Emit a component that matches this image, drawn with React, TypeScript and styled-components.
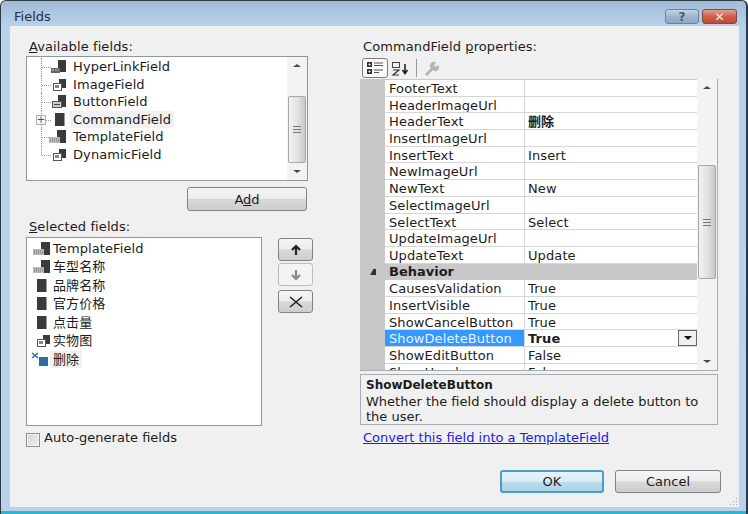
import styled, { createGlobalStyle } from 'styled-components';

const GlobalStyle = createGlobalStyle`
	html, body {
		margin: 0;
		padding: 0;
		background: #ffffff;
		overflow: hidden;
	}
	* {
		box-sizing: border-box;
	}
`;

const FONT = `"DejaVu Sans", Verdana, "Noto Sans CJK SC", sans-serif`;

const Window = styled.div`
	width: 748px;
	height: 514px;
	display: flex;
	flex-direction: column;
	padding: 0 7px 7px 9px;
	background: linear-gradient(180deg, #a3bbd6 0, #b9d2eb 26px, #b9d3ee 100%);
	border: 1px solid #2b3b45;
	border-width: 1px 2px 0 1px;
	border-radius: 6px 6px 0 0;
	box-shadow: inset 0 -3px 0 #2bb7cf;
	font-family: ${FONT};
	font-size: 13px;
	color: #1c1c1c;
`;

const TitleBar = styled.div`
	height: 25px;
	flex: none;
	display: flex;
	align-items: center;
	justify-content: space-between;
	padding: 6px 0 0 4px;
	margin-right: 2px;
`;

const Title = styled.span`
	font-size: 13px;
	color: #26303a;
`;

const WindowButtons = styled.div`
	display: flex;
	gap: 3px;
`;

const WindowButton = styled.div<{ $close?: boolean }>`
	width: ${({ $close }) => ($close ? '35px' : '34px')};
	height: 15px;
	display: flex;
	align-items: center;
	justify-content: center;
	border: 1px solid ${({ $close }) => ($close ? '#7d4a44' : '#6f8398')};
	border-radius: 3px;
	background: ${({ $close }) =>
		$close
			? 'linear-gradient(180deg, #e2a08e 0, #cf5f48 50%, #c04a36 100%)'
			: 'linear-gradient(180deg, #c3d5e7 0, #9db5ce 50%, #8ea8c4 100%)'};
	color: ${({ $close }) => ($close ? '#f4f4f4' : '#4d5a66')};
	font-size: 12px;
	font-weight: bold;
	line-height: 1;
`;

const Panel = styled.div`
	position: relative;
	flex: 1;
	display: flex;
	flex-direction: column;
	background: #f0f0f0;
	padding: 13px 18px 14px 16px;
	min-height: 0;
`;

const SizeGrip = styled.svg`
	position: absolute;
	right: 1px;
	bottom: 1px;
`;

const Columns = styled.div`
	display: flex;
	gap: 47px;
`;

const LeftColumn = styled.div`
	width: 287px;
	display: flex;
	flex-direction: column;
`;

const RightColumn = styled.div`
	width: 358px;
	display: flex;
	flex-direction: column;
`;

const FieldLabel = styled.div<{ $top?: number }>`
	height: 16px;
	line-height: 16px;
	padding-left: 3px;
	margin-top: ${({ $top }) => $top ?? 0}px;
	letter-spacing: 0.1px;
	white-space: nowrap;
`;

const ListBox = styled.div`
	width: 282px;
	height: 125px;
	margin-top: 1px;
	display: flex;
	border: 1px solid #8f979e;
	background: #ffffff;
	overflow: hidden;
`;

const TreeList = styled.div`
	flex: 1;
	padding-top: 1px;
`;

const TreeRow = styled.div<{ $last?: boolean }>`
	position: relative;
	height: 17.5px;
	display: flex;
	align-items: center;
	padding-left: 14px;

	&::before {
		content: '';
		position: absolute;
		left: 14px;
		top: 0;
		height: ${({ $last }) => ($last ? '9px' : '100%')};
		border-left: 1px dotted #9a9a9a;
	}

	&::after {
		content: '';
		position: absolute;
		left: 15px;
		top: 9px;
		width: 9px;
		border-top: 1px dotted #9a9a9a;
	}
`;

const Expander = styled.span`
	position: absolute;
	z-index: 1;
	left: 9px;
	top: 4px;
	width: 10px;
	height: 10px;
	display: flex;
	align-items: center;
	justify-content: center;
	background: #f4f6fa;
	border: 1px solid #aab0bb;
	color: #3d4f8c;
	font-size: 10px;
	line-height: 1;
`;

const TreeIcon = styled.span`
	width: 22px;
	margin-left: 3px;
	flex: none;
	display: flex;
	justify-content: flex-end;
	position: relative;
	z-index: 1;
`;

const ItemText = styled.span<{ $hot?: boolean; $gap: number }>`
	margin-left: ${({ $gap }) => $gap}px;
	padding: 0 ${({ $hot }) => ($hot ? '3px' : '0')};
	line-height: 17px;
	background: ${({ $hot }) => ($hot ? '#f1f1f1' : 'transparent')};
	letter-spacing: 0.1px;
	white-space: nowrap;
`;

const ScrollBar = styled.div<{ $width: number }>`
	width: ${({ $width }) => $width}px;
	flex: none;
	display: flex;
	flex-direction: column;
	align-items: center;
	background: #f3f3f3;
`;

const ScrollArrow = styled.div<{ $down?: boolean }>`
	height: 17px;
	flex: none;
	display: flex;
	align-items: center;
	justify-content: center;

	&::after {
		content: '';
		border-left: 4px solid transparent;
		border-right: 4px solid transparent;
		${({ $down }) => ($down ? 'border-top: 3px solid #4a4a4a;' : 'border-bottom: 3px solid #4a4a4a;')}
	}
`;

const ScrollTrack = styled.div<{ $top: number; $height: number }>`
	flex: 1;
	width: 100%;
	padding: ${({ $top }) => $top}px 1px 0;

	& > div {
		height: ${({ $height }) => $height}px;
	}
`;

const ScrollThumb = styled.div`
	display: flex;
	align-items: center;
	justify-content: center;
	border: 1px solid #a4a8ac;
	border-radius: 2px;
	background: linear-gradient(90deg, #f2f2f2 0, #e4e4e4 50%, #c8c8c8 100%);
`;

const Grip = styled.span`
	width: 8px;
	height: 7px;
	border-top: 1px solid #777;
	border-bottom: 1px solid #777;
	background: linear-gradient(#777, #777) center / 100% 1px no-repeat;
`;

const AddRow = styled.div`
	margin-top: 6px;
	padding-right: 6px;
	display: flex;
	justify-content: flex-end;
`;

const Button = styled.button<{ $width: number; $height?: number; $primary?: boolean }>`
	width: ${({ $width }) => $width}px;
	height: ${({ $height }) => $height ?? 24}px;
	padding: 0;
	display: flex;
	align-items: center;
	justify-content: center;
	font-family: ${FONT};
	font-size: 13px;
	color: #1c1c1c;
	border: ${({ $primary }) => ($primary ? '2px solid #4a9ccb' : '1px solid #7f8488')};
	border-radius: 3px;
	background: ${({ $primary }) =>
		$primary
			? 'linear-gradient(180deg, #e8f3f9 0, #d8ebf5 50%, #bcdcec 52%, #aed2e6 100%)'
			: 'linear-gradient(180deg, #f5f5f5 0, #ececec 48%, #d8d8d8 52%, #cdcdcd 100%)'};
`;

const SelectedArea = styled.div`
	display: flex;
	gap: 16px;
	margin-top: 2px;
`;

const SelectedList = styled.div`
	width: 236px;
	height: 189px;
	padding-top: 1px;
	border: 1px solid #8f979e;
	background: #ffffff;
	flex: none;
`;

const SelectedRow = styled.div`
	height: 18.5px;
	display: flex;
	align-items: center;
	padding-left: 3px;
`;

const SelectedIcon = styled.span`
	width: 20px;
	flex: none;
	display: flex;
	justify-content: flex-end;
`;

const MoveButtons = styled.div`
	display: flex;
	flex-direction: column;
	gap: 2px;
	padding-top: 1px;
`;

const MoveButton = styled(Button)<{ $gap?: number }>`
	margin-top: ${({ $gap }) => $gap ?? 0}px;

	&:disabled {
		background: #f3f3f3;
		border-color: #bcbcbc;
	}
`;

const AutoRow = styled.label`
	display: flex;
	align-items: center;
	gap: 4px;
	margin-top: 3px;
	height: 16px;
`;

const CheckBox = styled.span`
	width: 14px;
	height: 14px;
	margin-top: 5px;
	flex: none;
	border: 1px solid #8f8f8f;
	background: linear-gradient(135deg, #d4d4d4 0, #f0f0f0 100%);
	box-shadow: inset 0 0 0 1px #f4f4f4;
`;

const Toolbar = styled.div`
	height: 20px;
	margin-top: 3px;
	display: flex;
	align-items: center;
	padding-left: 2px;
	gap: 3px;
`;

const ToolToggle = styled.div<{ $on?: boolean }>`
	width: 26px;
	height: 20px;
	display: flex;
	align-items: center;
	justify-content: center;
	border: ${({ $on }) => ($on ? '1px solid #7a7f84' : '1px solid transparent')};
	border-radius: 3px;
	background: ${({ $on }) => ($on ? '#fafafa' : 'transparent')};
`;

const ToolSeparator = styled.span`
	width: 1px;
	height: 18px;
	background: #9a9a9a;
	margin: 0 3px 0 2px;
`;

const Grid = styled.div`
	height: 292px;
	margin-top: 1px;
	display: flex;
	border: 1px solid #a8adb2;
	border-width: 0 1px 1px 0;
	background: #ffffff;
	overflow: hidden;
`;

const GridBody = styled.div`
	flex: 1;
	min-width: 0;
	padding-top: 1px;
	background: #c8c8c8;
`;

const Row = styled.div`
	height: 16.7px;
	display: grid;
	grid-template-columns: 25px 140px 1fr;
	background: #c8c8c8;
`;

const NameCell = styled.div<{ $selected?: boolean }>`
	padding-left: 4px;
	line-height: 17px;
	white-space: nowrap;
	letter-spacing: 0.1px;
	overflow: hidden;
	border-bottom: 1px solid #d6d6d6;
	border-right: 1px solid #d6d6d6;
	background: ${({ $selected }) => ($selected ? '#3399ff' : '#ffffff')};
	color: ${({ $selected }) => ($selected ? '#e8f2ff' : '#1c1c1c')};
`;

const ValueCell = styled.div<{ $bold?: boolean }>`
	position: relative;
	padding-left: 3px;
	line-height: 17px;
	white-space: nowrap;
	letter-spacing: 0.1px;
	overflow: hidden;
	border-bottom: 1px solid #d6d6d6;
	background: #ffffff;
	font-weight: ${({ $bold }) => ($bold ? 'bold' : 'normal')};
`;

const DropButton = styled.span`
	position: absolute;
	right: 0;
	top: 0;
	width: 19px;
	height: 16px;
	display: flex;
	align-items: center;
	justify-content: center;
	border: 1px solid #66696c;
	background: #f0f0f0;

	&::after {
		content: '';
		border-left: 4px solid transparent;
		border-right: 4px solid transparent;
		border-top: 4px solid #111;
	}
`;

const CategoryRow = styled.div`
	height: 16.7px;
	display: grid;
	grid-template-columns: 25px 1fr;
	align-items: center;
	background: #c8c8c8;
`;

const Collapse = styled.span`
	justify-self: center;
	border-left: 3px solid transparent;
	border-bottom: 5px solid #333;
	border-right: 3px solid #333;
	width: 6px;
	height: 6px;
`;

const CategoryName = styled.span`
	padding-left: 4px;
	font-weight: bold;
`;

const Description = styled.div`
	height: 51px;
	margin-top: 3px;
	padding: 3px 5px 0;
	border: 1px solid #a8adb2;
	line-height: 15.5px;
`;

const DescriptionTitle = styled.div`
	font-size: 12px;
	font-weight: bold;
`;

const ConvertLink = styled.a`
	display: block;
	margin-top: 5px;
	padding-left: 3px;
	height: 16px;
	line-height: 16px;
	color: #1a1aee;
	text-decoration: underline;
`;

const Footer = styled.div`
	margin-top: auto;
	display: flex;
	justify-content: flex-end;
	gap: 11px;
`;

type IconKind = 'link' | 'image' | 'button' | 'command' | 'template' | 'bound' | 'delete';

const FieldIcon = ({ kind }: { kind: IconKind }) => (
	<svg width="20" height="15" viewBox="0 0 20 15">
		{kind === 'bound' ? (
			<rect x="7" y="1" width="9.500" height="13" fill="#3a3a3a" />
		) : kind === 'command' ? (
			<rect x="9" y="1" width="9.500" height="13" fill="#3a3a3a" />
		) : kind === 'delete' ? (
			<>
				<rect x="9" y="5" width="9" height="9" fill="#2f6f9f" />
				<path d="M2 1l6 5M8 1L2 6" stroke="#2f6f9f" strokeWidth="1.6" />
			</>
		) : kind === 'image' ? (
			<>
				<rect x="13" y="2" width="7" height="9" fill="#3a3a3a" />
				<rect x="7.500" y="6.500" width="8" height="7" fill="#fff" stroke="#555" />
				<rect x="9" y="8" width="4" height="3" fill="#888" />
			</>
		) : kind === 'button' ? (
			<>
				<rect x="12" y="1" width="8" height="12" fill="#3a3a3a" />
				<rect x="6.500" y="7.500" width="9" height="6" fill="#ccc" stroke="#555" />
				<path d="M8 10.500h6" stroke="#444" />
			</>
		) : kind === 'link' ? (
			<>
				<rect x="12" y="1" width="8" height="12" fill="#3a3a3a" />
				<rect x="5" y="9" width="9" height="5" fill="#666" />
				<path d="M6 11h7" stroke="#ccc" strokeDasharray="2 1" />
			</>
		) : (
			<>
				<rect x="11" y="1" width="9" height="13" fill="#3a3a3a" />
				<rect x="3" y="8" width="11" height="6" fill="#bbb" />
				<path d="M4 10h9M4 12h9" stroke="#777" strokeDasharray="1 1" />
			</>
		)}
	</svg>
);

const CategorizedIcon = () => (
	<svg width="18" height="14" viewBox="0 0 18 14">
		<path d="M1 1h5v5H1zM1 8h5v5H1z" fill="#333" />
		<path d="M2.500 3.500h2M3.500 2.500v2M2.500 10.500h2M3.500 9.500v2" stroke="#fff" />
		<path d="M8 2h9M8 4.500h9M8 9h9M8 11.500h5" stroke="#555" />
	</svg>
);

const SortIcon = () => (
	<svg width="20" height="15" viewBox="0 0 20 15">
		<rect x="1.500" y="1.500" width="7" height="5" fill="none" stroke="#444" />
		<path d="M2 9h6L2 14h6" fill="none" stroke="#333" strokeWidth="1.200" />
		<path d="M14 3v9M11.500 9l2.500 3.500L16.500 9" fill="none" stroke="#222" strokeWidth="1.600" />
	</svg>
);

const WrenchIcon = () => (
	<svg width="16" height="15" viewBox="0 0 16 15">
		<path d="M2 13l6-6a3.500 3.500 0 0 1 5-5l-2 2 2 2 2-2a3.500 3.500 0 0 1-5 5l-6 6z" fill="#b4b4b4" />
	</svg>
);

const ArrowIcon = ({ down, muted }: { down?: boolean; muted?: boolean }) => (
	<svg width="12" height="12" viewBox="0 0 12 12" style={{ transform: down ? 'rotate(180deg)' : undefined }}>
		<path d="M6 11V2M2 6l4-4 4 4" fill="none" stroke={muted ? '#8a8a8a' : '#222'} strokeWidth="2.200" />
	</svg>
);

const RemoveIcon = () => (
	<svg width="16" height="12" viewBox="0 0 16 12">
		<path d="M2 1l12 10M14 1L2 11" fill="none" stroke="#222" strokeWidth="1.600" />
	</svg>
);

const AVAILABLE: { label: string; kind: IconKind }[] = [
	{ label: 'HyperLinkField', kind: 'link' },
	{ label: 'ImageField', kind: 'image' },
	{ label: 'ButtonField', kind: 'button' },
	{ label: 'CommandField', kind: 'command' },
	{ label: 'TemplateField', kind: 'template' },
	{ label: 'DynamicField', kind: 'image' },
];

const SELECTED: { label: string; kind: IconKind }[] = [
	{ label: 'TemplateField', kind: 'template' },
	{ label: '车型名称', kind: 'template' },
	{ label: '品牌名称', kind: 'bound' },
	{ label: '官方价格', kind: 'bound' },
	{ label: '点击量', kind: 'bound' },
	{ label: '实物图', kind: 'image' },
	{ label: '删除', kind: 'delete' },
];

const APPEARANCE = [
	['FooterText', ''],
	['HeaderImageUrl', ''],
	['HeaderText', '删除'],
	['InsertImageUrl', ''],
	['InsertText', 'Insert'],
	['NewImageUrl', ''],
	['NewText', 'New'],
	['SelectImageUrl', ''],
	['SelectText', 'Select'],
	['UpdateImageUrl', ''],
	['UpdateText', 'Update'],
];

const BEHAVIOR = [
	['CausesValidation', 'True'],
	['InsertVisible', 'True'],
	['ShowCancelButton', 'True'],
	['ShowDeleteButton', 'True'],
	['ShowEditButton', 'False'],
	['ShowHeader', 'False'],
];

const App = () => {
	return (
		<Window>
			<GlobalStyle />
			<TitleBar>
				<Title>Fields</Title>
				<WindowButtons>
					<WindowButton>?</WindowButton>
					<WindowButton $close>✕</WindowButton>
				</WindowButtons>
			</TitleBar>
			<Panel>
				<Columns>
					<LeftColumn>
						<FieldLabel>
							<u>A</u>vailable fields:
						</FieldLabel>
						<ListBox>
							<TreeList>
								{AVAILABLE.map((item, i) => (
									<TreeRow key={item.label} $last={i === AVAILABLE.length - 1}>
										{item.kind === 'command' && <Expander>+</Expander>}
										<TreeIcon>
											<FieldIcon kind={item.kind} />
										</TreeIcon>
										<ItemText $hot={item.kind === 'command'} $gap={item.kind === 'command' ? 4 : 7}>
											{item.label}
										</ItemText>
									</TreeRow>
								))}
							</TreeList>
							<ScrollBar $width={20}>
								<ScrollArrow />
								<ScrollTrack $top={22} $height={67}>
									<ScrollThumb>
										<Grip />
									</ScrollThumb>
								</ScrollTrack>
								<ScrollArrow $down />
							</ScrollBar>
						</ListBox>
						<AddRow>
							<Button $width={120}>
								<span>
									A<u>d</u>d
								</span>
							</Button>
						</AddRow>
						<FieldLabel $top={8}>
							<u>S</u>elected fields:
						</FieldLabel>
						<SelectedArea>
							<SelectedList>
								{SELECTED.map(item => (
									<SelectedRow key={item.label}>
										<SelectedIcon>
											<FieldIcon kind={item.kind} />
										</SelectedIcon>
										<ItemText $hot={item.kind === 'delete'} $gap={item.kind === 'delete' ? 0 : 3}>
											{item.label}
										</ItemText>
									</SelectedRow>
								))}
							</SelectedList>
							<MoveButtons>
								<MoveButton $width={35} $height={23}>
									<ArrowIcon />
								</MoveButton>
								<MoveButton $width={35} $height={23} disabled>
									<ArrowIcon down muted />
								</MoveButton>
								<MoveButton $width={35} $height={23} $gap={2}>
									<RemoveIcon />
								</MoveButton>
							</MoveButtons>
						</SelectedArea>
						<AutoRow>
							<CheckBox />
							Auto-generate fields
						</AutoRow>
					</LeftColumn>
					<RightColumn>
						<FieldLabel>
							CommandField <u>p</u>roperties:
						</FieldLabel>
						<Toolbar>
							<ToolToggle $on>
								<CategorizedIcon />
							</ToolToggle>
							<SortIcon />
							<ToolSeparator />
							<WrenchIcon />
						</Toolbar>
						<Grid>
							<GridBody>
								{APPEARANCE.map(([name, value]) => (
									<Row key={name}>
										<span />
										<NameCell>{name}</NameCell>
										<ValueCell $bold={name === 'HeaderText'}>{value}</ValueCell>
									</Row>
								))}
								<CategoryRow>
									<Collapse />
									<CategoryName>Behavior</CategoryName>
								</CategoryRow>
								{BEHAVIOR.map(([name, value]) => (
									<Row key={name}>
										<span />
										<NameCell $selected={name === 'ShowDeleteButton'}>{name}</NameCell>
										<ValueCell $bold={name === 'ShowDeleteButton'}>
											{value}
											{name === 'ShowDeleteButton' && <DropButton />}
										</ValueCell>
									</Row>
								))}
							</GridBody>
							<ScrollBar $width={20}>
								<ScrollArrow />
								<ScrollTrack $top={69} $height={114}>
									<ScrollThumb>
										<Grip />
									</ScrollThumb>
								</ScrollTrack>
								<ScrollArrow $down />
							</ScrollBar>
						</Grid>
						<Description>
							<DescriptionTitle>ShowDeleteButton</DescriptionTitle>
							Whether the field should display a delete button to the user.
						</Description>
						<ConvertLink href="#">Convert this field into a TemplateField</ConvertLink>
					</RightColumn>
				</Columns>
				<Footer>
					<Button $width={104} $height={23} $primary>
						OK
					</Button>
					<Button $width={106} $height={23}>
						Cancel
					</Button>
				</Footer>
				<SizeGrip width="9" height="9" viewBox="0 0 9 9">
					<path d="M7 1h1v1H7zM4 4h1v1H4zM7 4h1v1H7zM1 7h1v1H1zM4 7h1v1H4zM7 7h1v1H7z" fill="#a8a8a8" />
				</SizeGrip>
			</Panel>
		</Window>
	);
};

export default App;
